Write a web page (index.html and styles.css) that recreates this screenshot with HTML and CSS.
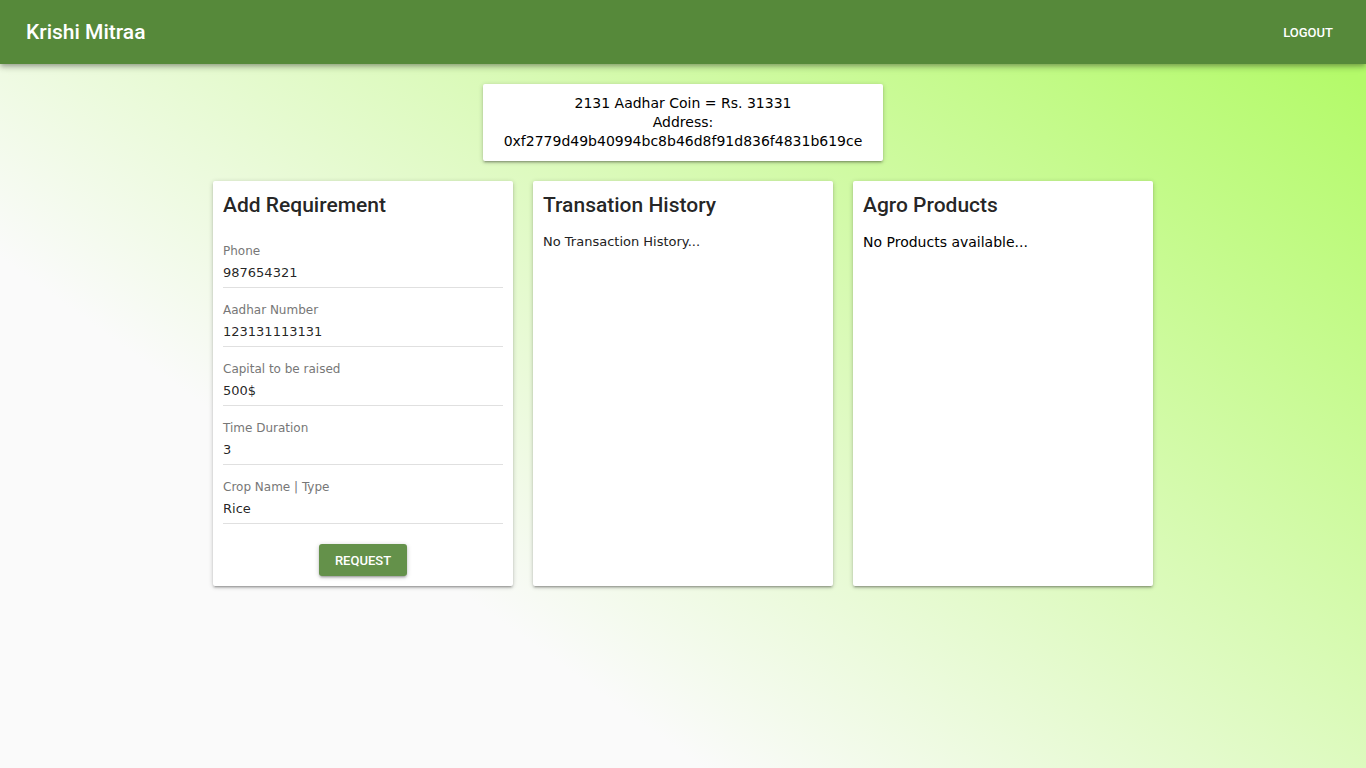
FILE: index.html
```html
<!DOCTYPE html>
<html lang="en">
<head>
<meta charset="utf-8">
<title>Krishi Mitraa</title>
<link rel="stylesheet" href="styles.css">
</head>
<body>
<header class="appbar">
  <div class="brand">Krishi Mitraa</div>
  <button class="logout" type="button">Logout</button>
</header>
<main class="main">
  <section class="coin">
    <div>2131 Aadhar Coin = Rs. 31331</div>
    <div>Address:</div>
    <div>0xf2779d49b40994bc8b46d8f91d836f4831b619ce</div>
  </section>
  <div class="cards">
    <section class="card">
      <h2 class="card-title">Add Requirement</h2>
      <div class="fields">
        <div class="field">
          <div class="field-label">Phone</div>
          <div class="field-value">987654321</div>
        </div>
        <div class="field">
          <div class="field-label">Aadhar Number</div>
          <div class="field-value">123131113131</div>
        </div>
        <div class="field">
          <div class="field-label">Capital to be raised</div>
          <div class="field-value">500$</div>
        </div>
        <div class="field">
          <div class="field-label">Time Duration</div>
          <div class="field-value">3</div>
        </div>
        <div class="field">
          <div class="field-label">Crop Name | Type</div>
          <div class="field-value">Rice</div>
        </div>
      </div>
      <div class="actions">
        <button class="btn" type="button">Request</button>
      </div>
    </section>
    <section class="card">
      <h2 class="card-title">Transation History</h2>
      <p class="empty empty-small">No Transaction History...</p>
    </section>
    <section class="card">
      <h2 class="card-title">Agro Products</h2>
      <p class="empty">No Products available...</p>
    </section>
  </div>
</main>
</body>
</html>
```
FILE: styles.css
```css
html, body {
  margin: 0;
  padding: 0;
}
body {
  min-height: 100vh;
  font-family: "DejaVu Sans", sans-serif;
  background: linear-gradient(36deg, #fafafa 29%, #b4fa6a 95%) fixed;
}
.appbar {
  position: relative;
  z-index: 1;
  height: 64px;
  box-sizing: border-box;
  padding: 0 24px;
  display: flex;
  align-items: center;
  justify-content: space-between;
  background: #56893a;
  color: #fff;
  box-shadow: 0 2px 4px -1px rgba(0,0,0,0.2), 0 4px 5px 0 rgba(0,0,0,0.14), 0 1px 10px 0 rgba(0,0,0,0.12);
}
.brand {
  font-family: Roboto, "Liberation Sans", sans-serif;
  font-size: 21px;
  font-weight: 500;
  line-height: 24px;
  padding-left: 2px;
}
.logout {
  background: none;
  border: none;
  color: #fff;
  font-family: Roboto, "Liberation Sans", sans-serif;
  font-size: 13px;
  font-weight: 500;
  text-transform: uppercase;
  padding: 7px 9px 5px 8px;
  line-height: 20px;
  cursor: pointer;
}
.main {
  padding-top: 20px;
  display: flex;
  flex-direction: column;
  align-items: center;
  gap: 20px;
}
.coin {
  width: 400px;
  box-sizing: border-box;
  padding: 10px 0;
  background: #fff;
  text-align: center;
  font-size: 14px;
  line-height: 19px;
  color: #000;
  border-radius: 2px;
  box-shadow: 0 1px 5px 0 rgba(0,0,0,0.2), 0 2px 2px 0 rgba(0,0,0,0.14), 0 3px 1px -2px rgba(0,0,0,0.12);
}
.cards {
  display: flex;
  gap: 20px;
  align-items: stretch;
}
.card {
  width: 300px;
  box-sizing: border-box;
  padding: 10px;
  background: #fff;
  border-radius: 2px;
  box-shadow: 0 1px 5px 0 rgba(0,0,0,0.2), 0 2px 2px 0 rgba(0,0,0,0.14), 0 3px 1px -2px rgba(0,0,0,0.12);
}
.card-title {
  margin: 0;
  padding-top: 2px;
  font-family: Roboto, "Liberation Sans", sans-serif;
  font-size: 21px;
  font-weight: 500;
  line-height: 24px;
  color: rgba(0,0,0,0.87);
}
.fields {
  padding-top: 12px;
}
.field {
  margin-top: 15px;
  padding-bottom: 4px;
  border-bottom: 1px solid #e0e0e0;
}
.field-label {
  font-size: 12px;
  line-height: 14px;
  color: #777;
}
.field-value {
  margin-top: 5px;
  font-size: 13px;
  line-height: 20px;
  color: rgba(0,0,0,0.87);
}
.actions {
  padding-top: 20px;
  display: flex;
  justify-content: center;
}
.btn {
  height: 32px;
  padding: 0 16px;
  border: none;
  border-radius: 3px;
  background: #64914a;
  color: #fff;
  font-family: Roboto, "Liberation Sans", sans-serif;
  font-size: 13px;
  font-weight: 500;
  text-transform: uppercase;
  cursor: pointer;
  box-shadow: 0 1px 5px 0 rgba(0,0,0,0.2), 0 2px 2px 0 rgba(0,0,0,0.14), 0 3px 1px -2px rgba(0,0,0,0.12);
}
.empty {
  margin: 17px 0 0;
  font-size: 14px;
  line-height: 16px;
  color: #000;
}
.empty-small {
  font-size: 13px;
  color: #222;
}
```
